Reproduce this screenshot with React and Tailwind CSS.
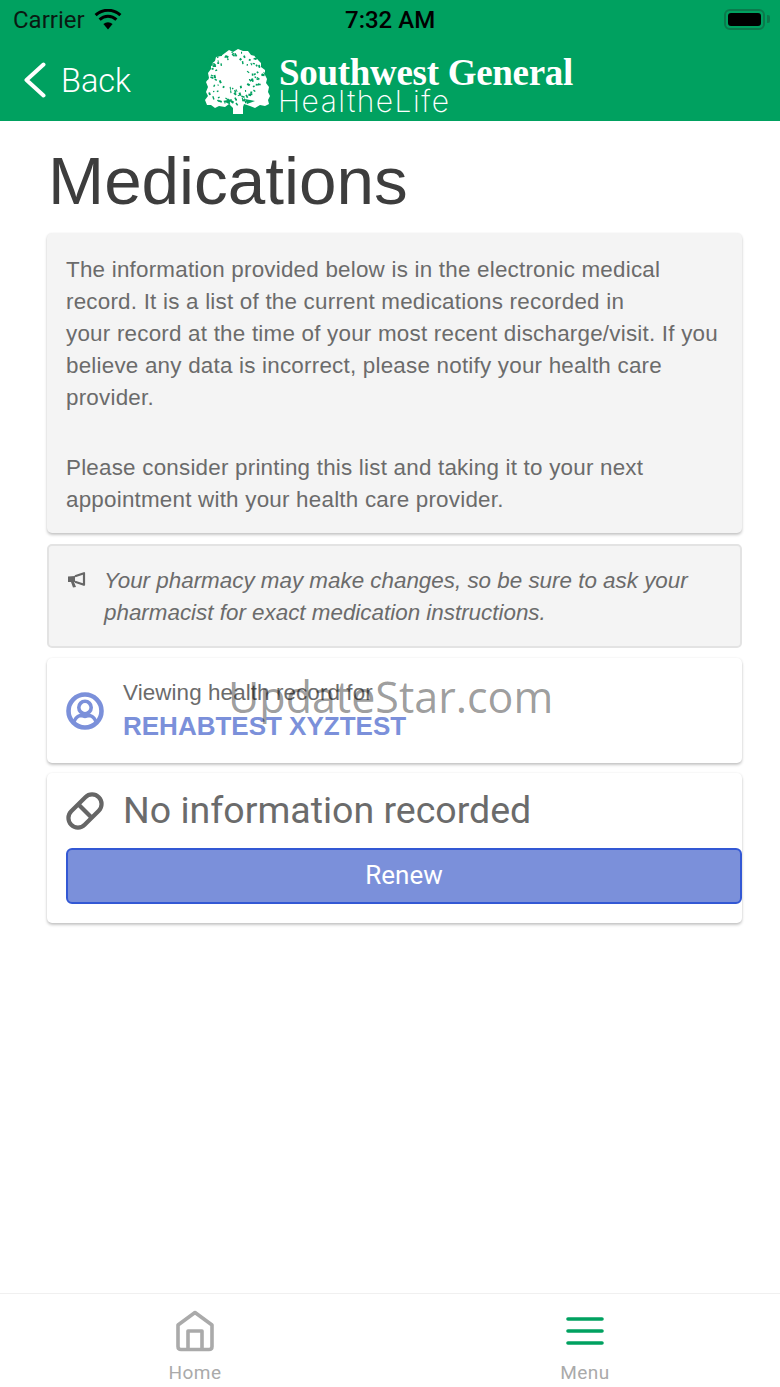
// speckles cut out of the tree crown, spread toward the rim
function treeHoles() {
  const out = [];
  let seed = 17;
  const next = () => {
    seed = (seed * 1103515245 + 12345) % 2147483648;
    return seed / 2147483648;
  };
  while (out.length < 105) {
    const x = 2 + next() * 61;
    const y = 2 + next() * 55;
    const d = Math.hypot((x - 28) / 32, (y - 24) / 30);
    if (d > 1.02 || d < 0.45) continue;
    out.push({ x, y, w: 1.2 + next() * 2.2, h: 0.9 + next() * 1.3, r: next() * 90 });
  }
  return out;
}
const holes = treeHoles();

function TreeLogo() {
  return (
    <svg width="65" height="65" viewBox="0 0 65 65" className="shrink-0 mt-[4px]">
      <path
        fill="#fff"
        d="M20 4 L24 1 L28 3 L33 0 L38 2 L43 2 L46 6 L50 7 L53 11 L56 14 L56 18 L60 21 L60 26 L62 30 L61 34 L64 38 L63 43 L65 47 L63 51 L64 55 L60 57 L55 56 L50 59 L45 57 L39 55 L38 58 L38 65 L28 65 L28 59 L24 55 L20 58 L14 57 L10 59 L6 56 L2 56 L0 51 L3 47 L1 43 L3 38 L1 33 L4 29 L3 24 L6 20 L6 15 L10 12 L11 8 L16 7 Z"
      />
      {holes.map((h, i) => (
        <rect
          key={i}
          x={h.x}
          y={h.y}
          width={h.w}
          height={h.h}
          transform={`rotate(${h.r} ${h.x} ${h.y})`}
          fill="#00a160"
        />
      ))}
      <path d="M18 52 L27 50 L24 55 Z M40 50 L50 52 L42 55 Z" fill="#00a160" />
    </svg>
  );
}

function WifiIcon() {
  return (
    <svg width="28" height="21" viewBox="0 0 28 21">
      <path d="M14 20.5 L9.4 15 A7 7 0 0 1 18.6 15 Z" fill="#000" />
      <path d="M5.6 10.6 A12 12 0 0 1 22.4 10.6" fill="none" stroke="#000" strokeWidth="3" />
      <path d="M1.6 6.2 A18 18 0 0 1 26.4 6.2" fill="none" stroke="#000" strokeWidth="3" />
    </svg>
  );
}

function BackChevron() {
  return (
    <svg width="22" height="36" viewBox="0 0 22 36" fill="none" stroke="#fff" strokeWidth="4" strokeLinecap="round" strokeLinejoin="round" className="shrink-0">
      <path d="M19.5 2.5 L2.5 18 L19.5 33.5" />
    </svg>
  );
}

function Megaphone() {
  return (
    <svg width="18" height="16" viewBox="0 0 18 16">
      <path d="M0 4.5 L7 4 L7 10 L6 10 L8 15 L5 15.5 L3 10 L0 10 Z" fill="#666" />
      <path d="M7 4.2 L16 1.2 L16 12.8 L7 9.8" fill="none" stroke="#666" strokeWidth="2.2" strokeLinejoin="round" />
    </svg>
  );
}

function UserCircle() {
  return (
    <svg width="38" height="38" viewBox="0 0 38 38" fill="none" stroke="#7b90da">
      <circle cx="19" cy="19" r="16.5" strokeWidth="4.6" />
      <circle cx="19" cy="15.5" r="6.2" strokeWidth="3.6" />
      <path d="M8 29.5 C10 24.5 14 23.5 15.5 23.5 C17.5 24.5 20.5 24.5 22.5 23.5 C24 23.5 28 24.5 30 29.5" strokeWidth="3.6" />
    </svg>
  );
}

function Pill() {
  return (
    <svg width="38" height="38" viewBox="0 0 38 38" fill="none" stroke="#666" strokeWidth="4.2">
      <rect x="-0.5" y="9.5" width="39" height="19" rx="9.5" transform="rotate(-45 19 19)" />
      <path d="M12.5 12.5 L25.5 25.5" />
    </svg>
  );
}

function HomeIcon() {
  return (
    <svg width="40" height="42" viewBox="0 0 40 42" fill="none" stroke="#aaa" strokeWidth="3.6" strokeLinejoin="round">
      <path d="M20 2.5 L37 15 L37 36.5 Q37 39.5 34 39.5 L6 39.5 Q3 39.5 3 36.5 L3 15 Z" />
      <path d="M13 39 L13 21 L27 21 L27 39" />
    </svg>
  );
}

function MenuIcon() {
  return (
    <svg width="38" height="30" viewBox="0 0 38 30" fill="none" stroke="#00a160" strokeWidth="3.6" strokeLinecap="round">
      <path d="M2 3 L36 3 M2 15 L36 15 M2 27 L36 27" />
    </svg>
  );
}

export default function App() {
  return (
    <div className="relative flex flex-col h-[1387px] w-[780px] bg-white overflow-hidden font-['Liberation_Sans',sans-serif]">
      <header className="bg-[#00a160] h-[121px] shrink-0">
        <div className="relative flex items-center justify-between h-[38px] pl-[13px] pr-[10px] font-['Roboto',sans-serif] text-[24px] text-[#0a1a12]">
          <div className="flex items-center gap-[9px]">
            <span className="pt-[2px]">Carrier</span>
            <WifiIcon />
          </div>
          <span className="absolute left-[345px] top-[2px] font-medium text-black">7:32 AM</span>
          <div className="flex items-center gap-[2px]">
            <div className="w-[41px] h-[21px] rounded-[6px] border-2 border-[#0b7a4c] p-[2px]">
              <div className="w-full h-full rounded-[3px] bg-black" />
            </div>
            <div className="w-[3px] h-[8px] rounded-r-[2px] bg-[#0b7a4c]" />
          </div>
        </div>
        <div className="flex items-center h-[83px]">
          <div className="flex items-center w-[205px] pl-[24px] text-white">
            <BackChevron />
            <span className="ml-[15px] mt-[4px] font-['Roboto',sans-serif] text-[32.5px] font-light">Back</span>
          </div>
          <TreeLogo />
          <div className="ml-[9px] mt-[15px] text-white">
            <div className="font-['Liberation_Serif',serif] font-bold text-[37px] leading-[32px] tracking-[-0.3px]">Southwest General</div>
            <div className="font-['Inter',sans-serif] font-extralight text-[30px] leading-[34px] tracking-[1.5px] -ml-[1px] -mt-[5px]">HealtheLife</div>
          </div>
        </div>
      </header>

      <main className="flex-1 pl-[47px] pr-[38px] text-[#6b6b6b]">
        <h1 className="ml-[1px] mt-[21px] mb-[14px] text-[67.4px] leading-[77px] text-[#3d3d3d]">Medications</h1>

        <div className="h-[300px] rounded-[5px] bg-[#f4f4f4] px-[19px] pt-[21px] text-[22.4px] leading-[32px] tracking-[0.22px] shadow-[0_2px_3px_rgba(0,0,0,0.22),0_0_2px_rgba(0,0,0,0.06)]">
          <p>
            The information provided below is in the electronic medical record. It is a list of the current medications recorded in
            <br />
            your record at the time of your most recent discharge/visit. If you believe any data is incorrect, please notify your health care provider.
          </p>
          <p className="mt-[38px]">Please consider printing this list and taking it to your next appointment with your health care provider.</p>
        </div>

        <div className="mt-[11px] h-[104px] flex gap-[18px] rounded-[5px] border-2 border-[#e3e3e3] bg-[#f4f4f4] pl-[19px] pr-[19px] pt-[19px] text-[22.4px] leading-[32px] italic">
          <div className="pt-[7px] shrink-0">
            <Megaphone />
          </div>
          <p>Your pharmacy may make changes, so be sure to ask your pharmacist for exact medication instructions.</p>
        </div>

        <div className="mt-[10px] h-[105px] flex items-center gap-[19px] rounded-[5px] bg-white pl-[19px] shadow-[0_2px_3px_rgba(0,0,0,0.22),0_0_2px_rgba(0,0,0,0.08)]">
          <UserCircle />
          <div>
            <div className="mt-[1px] text-[22.4px] leading-[30px] tracking-[0.1px]">Viewing health record for</div>
            <div className="text-[26px] leading-[37px] font-bold text-[#7b90da]">REHABTEST XYZTEST</div>
          </div>
        </div>

        <div className="mt-[10px] h-[150px] rounded-[5px] bg-white pl-[19px] pt-[15px] shadow-[0_2px_3px_rgba(0,0,0,0.22),0_0_2px_rgba(0,0,0,0.08)]">
          <div className="flex items-center gap-[19px] h-[45px] font-['Roboto',sans-serif]">
            <Pill />
            <span className="text-[37.5px]">No information recorded</span>
          </div>
          <button className="mt-[15px] w-full h-[56px] pb-[2px] rounded-[6px] border-2 border-[#3358d4] bg-[#7b90da] text-white font-['Roboto',sans-serif] text-[26px]">
            Renew
          </button>
        </div>
      </main>

      <nav className="grid grid-cols-2 h-[94px] shrink-0 border-t border-[#f0f0f0] font-['Roboto',sans-serif] text-[19px] tracking-[0.5px] text-[#aaa]">
        <div className="flex flex-col items-center pt-[16px]">
          <div className="h-[42px] flex items-center"><HomeIcon /></div>
          <span className="mt-[9px] leading-[24px]">Home</span>
        </div>
        <div className="flex flex-col items-center pt-[16px]">
          <div className="h-[42px] flex items-center"><MenuIcon /></div>
          <span className="mt-[9px] leading-[24px]">Menu</span>
        </div>
      </nav>

      {/* watermark sits over the page */}
      <div className="absolute left-[228px] top-[669px] font-['Open_Sans',sans-serif] text-[43px] leading-[56px] text-black/40 pointer-events-none">
        UpdateStar.com
      </div>
    </div>
  );
}
